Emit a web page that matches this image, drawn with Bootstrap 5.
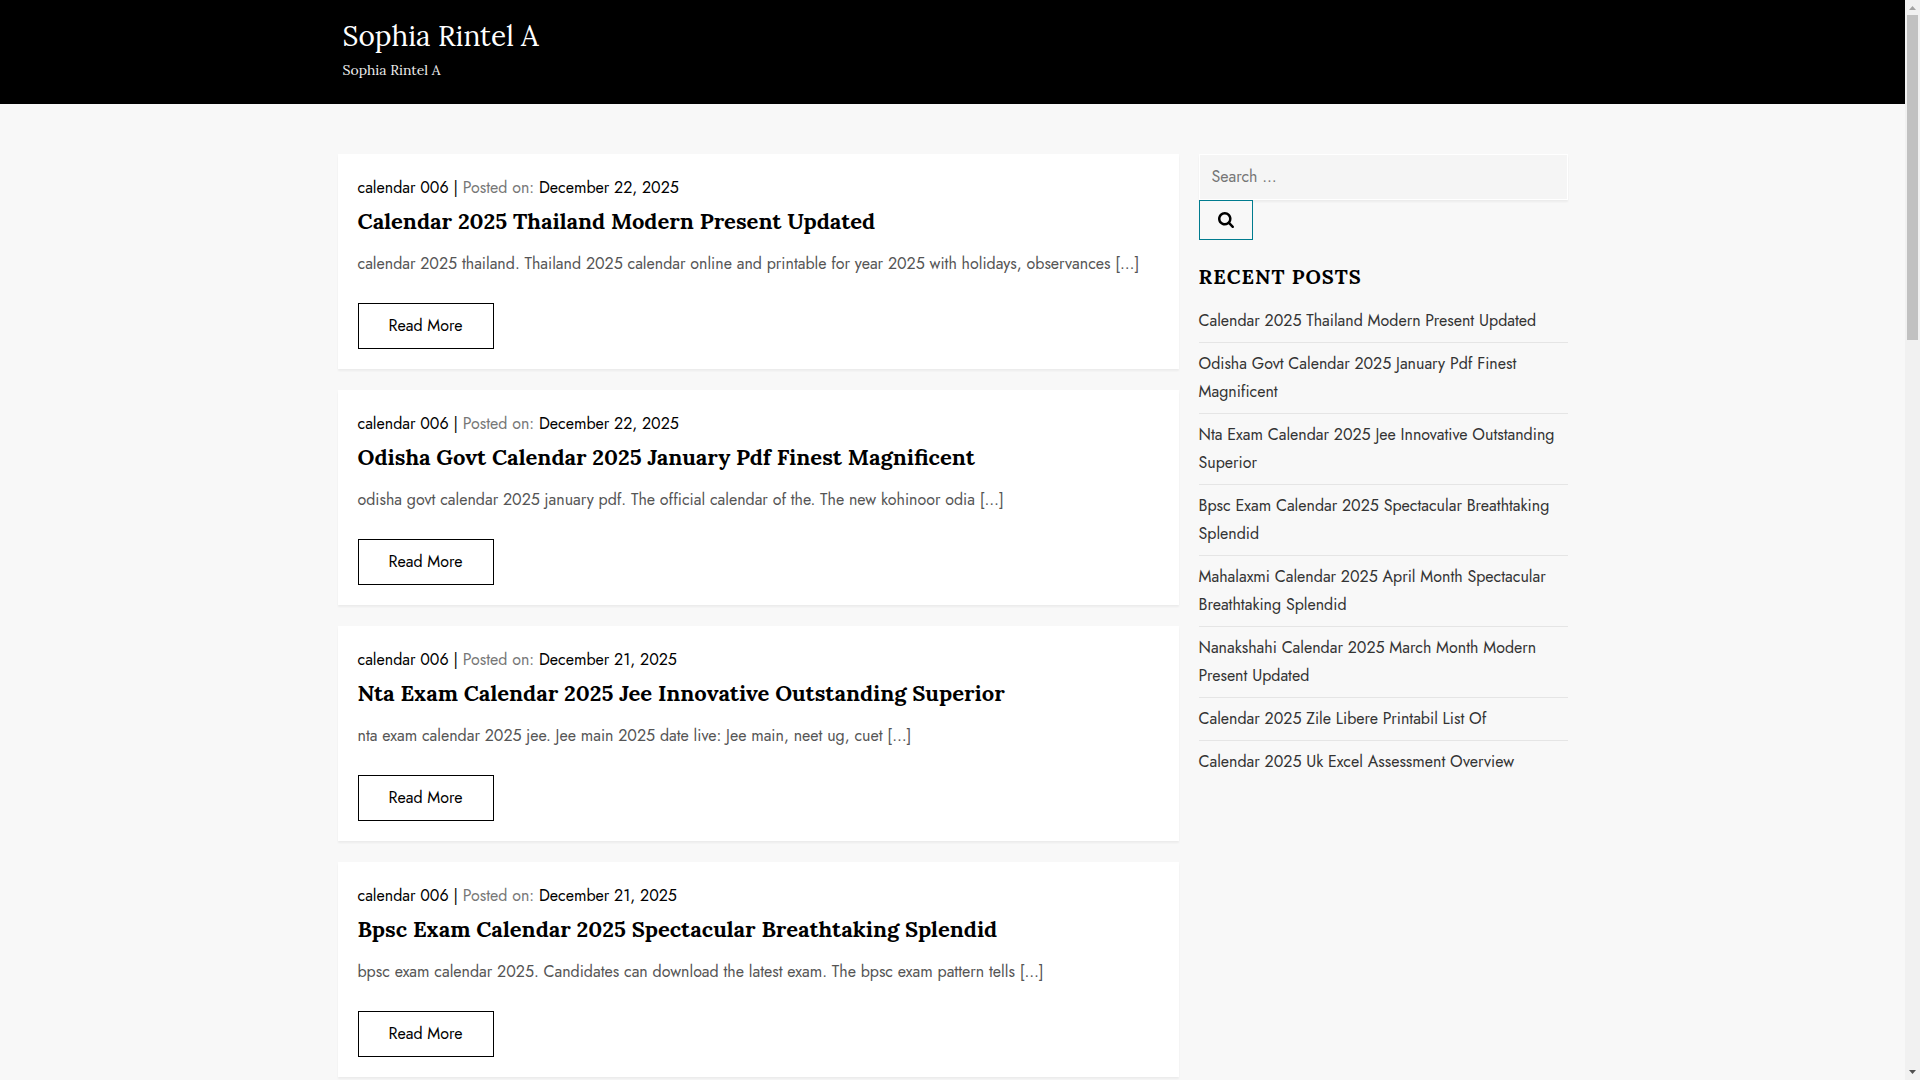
<!DOCTYPE html>
<html lang="en">
<head>
<meta charset="utf-8">
<meta name="viewport" content="width=device-width, initial-scale=1">
<title>Sophia Rintel A</title>
<link href="https://cdn.jsdelivr.net/npm/bootstrap@5.3.0/dist/css/bootstrap.min.css" rel="stylesheet">
<style>
  body { font-family: Jost, Lato, sans-serif; font-size: 16px; line-height: 28px; background: #f8f8f8; color: #555; height: 100vh; overflow: hidden; }
  a { text-decoration: none; color: #000; }
  .page-area { height: 100vh; overflow: hidden; }
  .site-wrap { width: 100%; max-width: 1230px; margin: 0 auto; }
  .serif { font-family: Lora, "Liberation Serif", serif; }
  .site-header { background: #000; padding: 16px 0 20px; }
  .branding { padding: 0 5px; }
  .site-title { font-size: 28px; line-height: 40px; font-weight: 400; color: #fff; }
  .site-title a { color: #fff; }
  .tagline { font-size: 14px; line-height: 28px; color: #eee; }
  .content-area { padding-top: 50px; gap: 20px; }
  .posts { flex: 1 1 0; min-width: 0; gap: 21px; }
  .sidebar { flex: 0 0 30%; }
  .post { background: #fff; padding: 20px; box-shadow: 0 2px 2px rgba(0,0,0,.05); }
  .meta { color: #777; }
  .post-title { font-size: 22px; line-height: 30px; font-weight: 700; margin: 4px 0 14px; }
  .excerpt { margin: 0 0 25px; }
  .read-more { border: 1px solid #000; border-radius: 0; padding: 8px 30px; line-height: 28px; color: #000; }
  .search-box { height: 46px; border: 1px solid #fff; border-radius: 0; background: #f5f5f5; padding: 0 12px 2px; font-size: 16px; box-shadow: 0 2px 2px rgba(0,0,0,.05); }
  .search-box::placeholder { color: #757575; }
  .search-btn { width: 54px; height: 40px; border: 1px solid #007c8f; border-radius: 0; padding: 0; background: #f8f8f8; }
  .widget-title { font-size: 20px; line-height: 28px; font-weight: 700; letter-spacing: 1px; color: #000; margin: 23px 0 9px; }
  .recent li { padding: 7px 0; border-bottom: 1px solid #e5e5e5; }
  .recent li:last-child { border-bottom: 0; }
  .recent a { color: #333; }
  .scroller { width: 15px; height: 100vh; background: #f1f1f1; flex: none; }
  .thumb { width: 11px; height: 325px; background: #c1c1c1; }
</style>
</head>
<body class="d-flex">
<div class="page-area flex-grow-1">
  <header class="site-header">
    <div class="site-wrap branding">
      <h1 class="site-title serif m-0"><a href="#">Sophia Rintel A</a></h1>
      <p class="tagline serif m-0">Sophia Rintel A</p>
    </div>
  </header>
  <div class="site-wrap content-area d-flex align-items-start">
    <main class="posts d-flex flex-column">
      <article class="post">
        <div class="meta"><a href="#">calendar 006 | </a>Posted on: <a href="#">December 22, 2025</a></div>
        <h2 class="post-title serif"><a href="#">Calendar 2025 Thailand Modern Present Updated</a></h2>
        <p class="excerpt">calendar 2025 thailand. Thailand 2025 calendar online and printable for year 2025 with holidays, observances […]</p>
        <a href="#" class="btn read-more d-inline-block align-top">Read More</a>
      </article>
      <article class="post">
        <div class="meta"><a href="#">calendar 006 | </a>Posted on: <a href="#">December 22, 2025</a></div>
        <h2 class="post-title serif"><a href="#">Odisha Govt Calendar 2025 January Pdf Finest Magnificent</a></h2>
        <p class="excerpt">odisha govt calendar 2025 january pdf. The official calendar of the. The new kohinoor odia […]</p>
        <a href="#" class="btn read-more d-inline-block align-top">Read More</a>
      </article>
      <article class="post">
        <div class="meta"><a href="#">calendar 006 | </a>Posted on: <a href="#">December 21, 2025</a></div>
        <h2 class="post-title serif"><a href="#">Nta Exam Calendar 2025 Jee Innovative Outstanding Superior</a></h2>
        <p class="excerpt">nta exam calendar 2025 jee. Jee main 2025 date live: Jee main, neet ug, cuet […]</p>
        <a href="#" class="btn read-more d-inline-block align-top">Read More</a>
      </article>
      <article class="post">
        <div class="meta"><a href="#">calendar 006 | </a>Posted on: <a href="#">December 21, 2025</a></div>
        <h2 class="post-title serif"><a href="#">Bpsc Exam Calendar 2025 Spectacular Breathtaking Splendid</a></h2>
        <p class="excerpt">bpsc exam calendar 2025. Candidates can download the latest exam. The bpsc exam pattern tells […]</p>
        <a href="#" class="btn read-more d-inline-block align-top">Read More</a>
      </article>
    </main>
    <aside class="sidebar">
      <form role="search">
        <input id="search" type="search" class="form-control search-box" placeholder="Search …" aria-label="Search for">
        <button type="button" class="btn search-btn d-flex align-items-center justify-content-center" aria-label="Search">
          <svg width="16" height="16" viewBox="0 0 1664 1664" aria-hidden="true"><path fill="#000" d="M1152 704q0-185-131.500-316.500T704 256 387.500 387.500 256 704t131.500 316.500T704 1152t316.500-131.500T1152 704zm512 832q0 52-38 90t-90 38q-54 0-90-38l-343-342q-179 124-399 124-143 0-273.500-55.500t-225-150-150-225T0 704t55.500-273.500 150-225 225-150T704 0t273.500 55.500 225 150 150 225T1408 704q0 220-124 399l343 343q37 37 37 90z"/></svg>
        </button>
      </form>
      <h2 class="widget-title serif text-uppercase">Recent Posts</h2>
      <ul class="recent list-unstyled m-0">
        <li><a href="#">Calendar 2025 Thailand Modern Present Updated</a></li>
        <li><a href="#">Odisha Govt Calendar 2025 January Pdf Finest Magnificent</a></li>
        <li><a href="#">Nta Exam Calendar 2025 Jee Innovative Outstanding Superior</a></li>
        <li><a href="#">Bpsc Exam Calendar 2025 Spectacular Breathtaking Splendid</a></li>
        <li><a href="#">Mahalaxmi Calendar 2025 April Month Spectacular Breathtaking Splendid</a></li>
        <li><a href="#">Nanakshahi Calendar 2025 March Month Modern Present Updated</a></li>
        <li><a href="#">Calendar 2025 Zile Libere Printabil List Of</a></li>
        <li><a href="#">Calendar 2025 Uk Excel Assessment Overview</a></li>
      </ul>
    </aside>
  </div>
</div>
<div class="scroller d-flex flex-column align-items-center" aria-hidden="true">
  <svg width="15" height="15" viewBox="0 0 15 15"><path fill="#a3a3a3" d="M4 10h7L7.500 6z"/></svg>
  <div class="thumb"></div>
  <svg class="mt-auto" width="15" height="15" viewBox="0 0 15 15"><path fill="#505050" d="M4 5h7L7.500 9z"/></svg>
</div>
<script src="https://cdn.jsdelivr.net/npm/bootstrap@5.3.0/dist/js/bootstrap.bundle.min.js"></script>
</body>
</html>
